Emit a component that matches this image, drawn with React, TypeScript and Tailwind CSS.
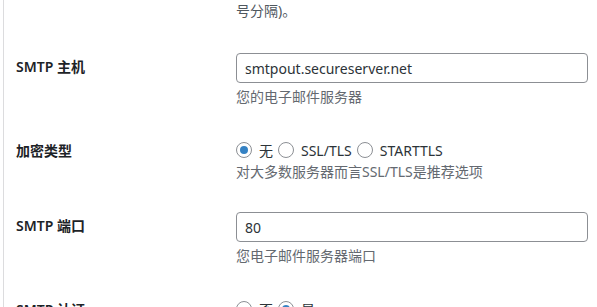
import { useState } from "react";

const font = {
  fontFamily: '"Noto Sans", "Noto Sans CJK SC", sans-serif',
};

function Radio({ checked }: { checked: boolean }) {
  return (
    <span className="inline-flex h-4 w-4 shrink-0 items-center justify-center rounded-full border border-[#8c8f94] bg-white">
      {checked && <span className="h-2 w-2 rounded-full bg-[#3582c4]" />}
    </span>
  );
}

function RadioGroup({ options, value }: { options: string[]; value: string }) {
  return (
    <div className="flex h-5 items-center">
      {options.map((opt, i) => (
        <label key={opt} className={`flex items-center ${i > 0 ? "ml-[5px]" : ""}`}>
          <Radio checked={opt === value} />
          <span className="ml-[7px] text-[14px] text-[#2c3338]">{opt}</span>
        </label>
      ))}
    </div>
  );
}

function Row({ label, children }: { label: string; children: React.ReactNode }) {
  return (
    <div className="flex">
      <div className="w-[220px] shrink-0 pt-[19px] pb-5 text-[14px] font-semibold leading-5 text-[#1d2327]">
        {label}
      </div>
      <div className="flex-1 py-[15px] pr-[9px]">{children}</div>
    </div>
  );
}

export default function App() {
  const [host, setHost] = useState("smtpout.secureserver.net");
  const [port, setPort] = useState("80");

  return (
    <div className="h-[307px] w-[597px] overflow-hidden bg-white" style={font}>
      <div className="ml-[3px] h-full border-l border-[#dcdcde] pl-3">
        <div className="pb-[15px] pt-[1px] pl-[220px] text-[14px] leading-5 text-[#50575e]">
          号分隔)。
        </div>

        <div className="pt-[2px]">
          <Row label="SMTP 主机">
            <input
              value={host}
              onChange={(e) => setHost(e.target.value)}
              className="h-[30px] w-full rounded-[4px] border border-[#8c8f94] px-2 text-[14px] text-[#2c3338] outline-none"
              style={font}
            />
            <p className="mt-1 text-[14px] leading-5 text-[#646970]">您的电子邮件服务器</p>
          </Row>
        </div>

        <Row label="加密类型">
          <div className="pt-[3px]">
            <RadioGroup options={["无", "SSL/TLS", "STARTTLS"]} value="无" />
          </div>
          <p className="mt-[2px] text-[14px] leading-5 text-[#646970]">
            对大多数服务器而言SSL/TLS是推荐选项
          </p>
        </Row>

        <Row label="SMTP 端口">
          <input
            value={port}
            onChange={(e) => setPort(e.target.value)}
            className="h-[30px] w-full rounded-[4px] border border-[#8c8f94] px-2 text-[14px] text-[#2c3338] outline-none"
            style={font}
          />
          <p className="mt-1 text-[14px] leading-5 text-[#646970]">您电子邮件服务器端口</p>
        </Row>

        <Row label="SMTP 认证">
          <div className="pt-[3px]">
            <RadioGroup options={["否", "是"]} value="是" />
          </div>
        </Row>
      </div>
    </div>
  );
}
